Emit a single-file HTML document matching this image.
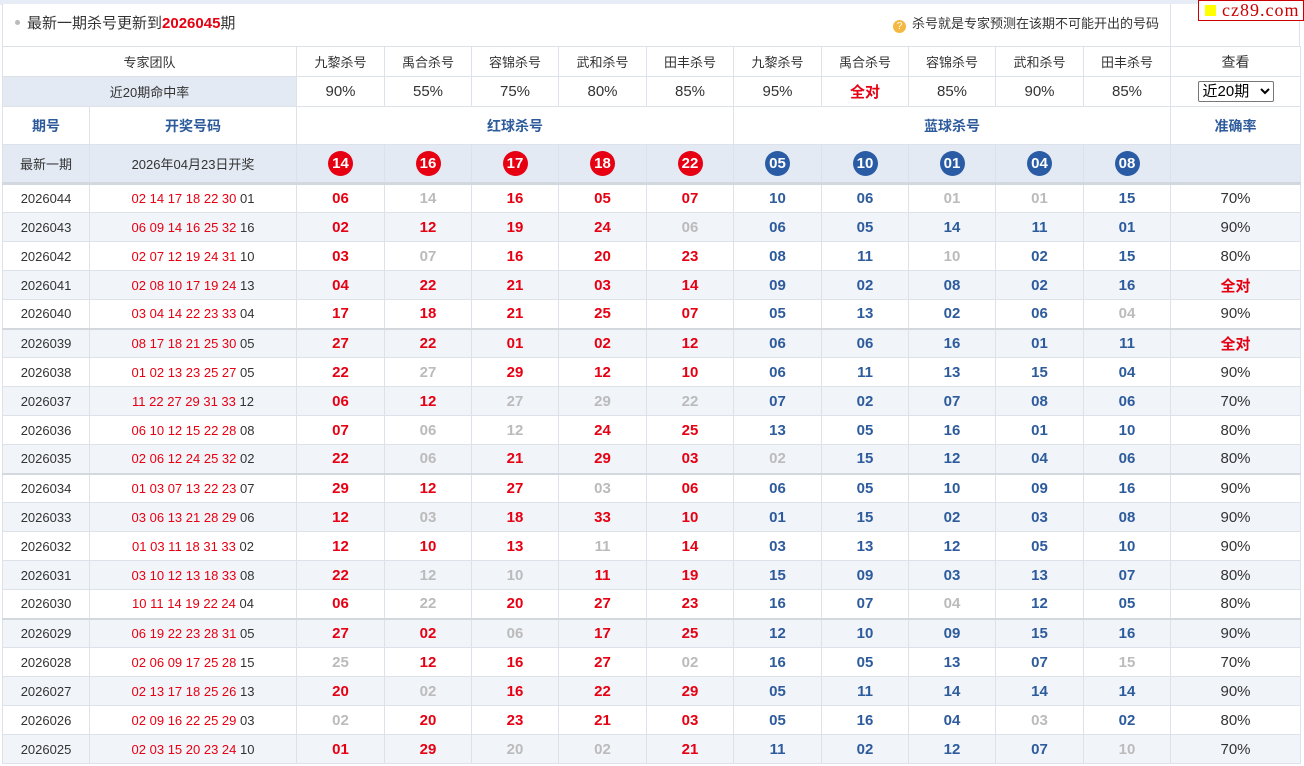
<!DOCTYPE html>
<html><head><meta charset="utf-8">
<style>
*{margin:0;padding:0;box-sizing:border-box}
body{width:1304px;height:766px;background:#fff;font-family:"Liberation Sans","Noto Sans CJK SC",sans-serif;color:#333;position:relative;overflow:hidden}
.topbar{position:absolute;left:0;top:0;width:1304px;height:5px;background:#e6edf6}
.titlebox{position:absolute;left:2px;top:4px;width:1168px;height:42px;border-left:1px solid #dde2ea;background:#fff}
.rbox{position:absolute;left:1170px;top:4px;width:130px;height:42px;border-left:1px solid #dde2ea;border-right:1px solid #dde2ea;background:#fff}
.title{position:absolute;left:12px;top:11px;font-size:15px;color:#333;line-height:18px}
.title i{display:inline-block;width:5px;height:5px;border-radius:50%;background:#bbb;margin-right:7px;vertical-align:3px}
.title b{color:#e60012}
.tip{position:absolute;left:890px;top:12px;font-size:13px;color:#333;line-height:16px}
.tip i{display:inline-block;width:13px;height:13px;border-radius:50%;background:#f5b843;color:#fff;font-size:10px;text-align:center;line-height:13px;font-style:normal;margin-right:6px;vertical-align:-1px}
.logo{position:absolute;left:1198px;top:0;width:106px;height:21px;border:1px solid #c00;background:#fff;font-family:"Liberation Serif",serif;font-size:18px;color:#c00;line-height:18px;padding-left:23px;letter-spacing:1px}
.logo i{position:absolute;left:6px;top:4px;width:11px;height:11px;background:#ff0}
table{position:absolute;left:2px;top:46px;border-collapse:collapse;table-layout:fixed;width:1298px}
td{border:1px solid #dde2ea;text-align:center;font-size:13px;white-space:nowrap;padding:0}
.h1 td{height:30px}
.h2 td{height:30px;font-size:15px}
.h2 td.lb{background:#e3eaf4;font-size:13px}
.h3 td{height:38px;color:#2d5b9c;font-weight:bold;font-size:14px}
.h4 td{height:39px;background:#e3eaf4;border-bottom:3px solid #d3d8df}
.ball{display:inline-block;width:25px;height:25px;border-radius:50%;color:#fff;font-weight:bold;font-size:15px;line-height:25px;font-family:"Liberation Sans",sans-serif}
.rb{background:#e60012}.bb{background:#2a5ca5}
.d td{height:29px;font-size:13px}
.d td.n{font-weight:bold;font-size:15px;color:#e60012}
.d td.m{font-weight:bold;font-size:15px;color:#2d5b9c}
.d td.g{color:#bbb}
.d td.dr{color:#e60012}
.d td.dr span{color:#333}
.d td.p{font-size:15px}
.d td.all{color:#e60012;font-weight:bold;font-size:15px}
.l td{background:#f1f4f9}
.e td{border-bottom:2px solid #d3d8df}
select{font-size:15px;width:76px;height:21px;border:1px solid #777;border-radius:2px;background:#fff;font-family:"Liberation Sans","Noto Sans CJK SC",sans-serif}
.red{color:#e60012;font-weight:bold}
</style></head><body>
<div class="topbar"></div>
<div class="titlebox"><div class="title"><i></i>最新一期杀号更新到<b>2026045</b>期</div><div class="tip"><i>?</i>杀号就是专家预测在该期不可能开出的号码</div></div>
<div class="rbox"></div>
<div class="logo"><i></i>cz89.com</div>
<table>
<colgroup><col style="width:87px"><col style="width:207px"><col style="width:88px"><col style="width:87px"><col style="width:87px"><col style="width:88px"><col style="width:87px"><col style="width:88px"><col style="width:87px"><col style="width:87px"><col style="width:88px"><col style="width:87px"><col style="width:130px"></colgroup>
<tr class="h1"><td colspan="2">专家团队</td><td>九黎杀号</td><td>禹合杀号</td><td>容锦杀号</td><td>武和杀号</td><td>田丰杀号</td><td>九黎杀号</td><td>禹合杀号</td><td>容锦杀号</td><td>武和杀号</td><td>田丰杀号</td><td style="font-size:14px">查看</td></tr>
<tr class="h2"><td colspan="2" class="lb">近20期命中率</td><td>90%</td><td>55%</td><td>75%</td><td>80%</td><td>85%</td><td>95%</td><td class="red">全对</td><td>85%</td><td>90%</td><td>85%</td><td><select><option>近20期</option></select></td></tr>
<tr class="h3"><td>期号</td><td>开奖号码</td><td colspan="5">红球杀号</td><td colspan="5">蓝球杀号</td><td>准确率</td></tr>
<tr class="h4"><td>最新一期</td><td>2026年04月23日开奖</td><td><span class="ball rb">14</span></td><td><span class="ball rb">16</span></td><td><span class="ball rb">17</span></td><td><span class="ball rb">18</span></td><td><span class="ball rb">22</span></td><td><span class="ball bb">05</span></td><td><span class="ball bb">10</span></td><td><span class="ball bb">01</span></td><td><span class="ball bb">04</span></td><td><span class="ball bb">08</span></td><td></td></tr>
<tr class="d"><td>2026044</td><td class="dr">02 14 17 18 22 30 <span>01</span></td><td class="n">06</td><td class="n g">14</td><td class="n">16</td><td class="n">05</td><td class="n">07</td><td class="m">10</td><td class="m">06</td><td class="m g">01</td><td class="m g">01</td><td class="m">15</td><td class="p">70%</td></tr>
<tr class="d l"><td>2026043</td><td class="dr">06 09 14 16 25 32 <span>16</span></td><td class="n">02</td><td class="n">12</td><td class="n">19</td><td class="n">24</td><td class="n g">06</td><td class="m">06</td><td class="m">05</td><td class="m">14</td><td class="m">11</td><td class="m">01</td><td class="p">90%</td></tr>
<tr class="d"><td>2026042</td><td class="dr">02 07 12 19 24 31 <span>10</span></td><td class="n">03</td><td class="n g">07</td><td class="n">16</td><td class="n">20</td><td class="n">23</td><td class="m">08</td><td class="m">11</td><td class="m g">10</td><td class="m">02</td><td class="m">15</td><td class="p">80%</td></tr>
<tr class="d l"><td>2026041</td><td class="dr">02 08 10 17 19 24 <span>13</span></td><td class="n">04</td><td class="n">22</td><td class="n">21</td><td class="n">03</td><td class="n">14</td><td class="m">09</td><td class="m">02</td><td class="m">08</td><td class="m">02</td><td class="m">16</td><td class="all">全对</td></tr>
<tr class="d e"><td>2026040</td><td class="dr">03 04 14 22 23 33 <span>04</span></td><td class="n">17</td><td class="n">18</td><td class="n">21</td><td class="n">25</td><td class="n">07</td><td class="m">05</td><td class="m">13</td><td class="m">02</td><td class="m">06</td><td class="m g">04</td><td class="p">90%</td></tr>
<tr class="d l"><td>2026039</td><td class="dr">08 17 18 21 25 30 <span>05</span></td><td class="n">27</td><td class="n">22</td><td class="n">01</td><td class="n">02</td><td class="n">12</td><td class="m">06</td><td class="m">06</td><td class="m">16</td><td class="m">01</td><td class="m">11</td><td class="all">全对</td></tr>
<tr class="d"><td>2026038</td><td class="dr">01 02 13 23 25 27 <span>05</span></td><td class="n">22</td><td class="n g">27</td><td class="n">29</td><td class="n">12</td><td class="n">10</td><td class="m">06</td><td class="m">11</td><td class="m">13</td><td class="m">15</td><td class="m">04</td><td class="p">90%</td></tr>
<tr class="d l"><td>2026037</td><td class="dr">11 22 27 29 31 33 <span>12</span></td><td class="n">06</td><td class="n">12</td><td class="n g">27</td><td class="n g">29</td><td class="n g">22</td><td class="m">07</td><td class="m">02</td><td class="m">07</td><td class="m">08</td><td class="m">06</td><td class="p">70%</td></tr>
<tr class="d"><td>2026036</td><td class="dr">06 10 12 15 22 28 <span>08</span></td><td class="n">07</td><td class="n g">06</td><td class="n g">12</td><td class="n">24</td><td class="n">25</td><td class="m">13</td><td class="m">05</td><td class="m">16</td><td class="m">01</td><td class="m">10</td><td class="p">80%</td></tr>
<tr class="d l e"><td>2026035</td><td class="dr">02 06 12 24 25 32 <span>02</span></td><td class="n">22</td><td class="n g">06</td><td class="n">21</td><td class="n">29</td><td class="n">03</td><td class="m g">02</td><td class="m">15</td><td class="m">12</td><td class="m">04</td><td class="m">06</td><td class="p">80%</td></tr>
<tr class="d"><td>2026034</td><td class="dr">01 03 07 13 22 23 <span>07</span></td><td class="n">29</td><td class="n">12</td><td class="n">27</td><td class="n g">03</td><td class="n">06</td><td class="m">06</td><td class="m">05</td><td class="m">10</td><td class="m">09</td><td class="m">16</td><td class="p">90%</td></tr>
<tr class="d l"><td>2026033</td><td class="dr">03 06 13 21 28 29 <span>06</span></td><td class="n">12</td><td class="n g">03</td><td class="n">18</td><td class="n">33</td><td class="n">10</td><td class="m">01</td><td class="m">15</td><td class="m">02</td><td class="m">03</td><td class="m">08</td><td class="p">90%</td></tr>
<tr class="d"><td>2026032</td><td class="dr">01 03 11 18 31 33 <span>02</span></td><td class="n">12</td><td class="n">10</td><td class="n">13</td><td class="n g">11</td><td class="n">14</td><td class="m">03</td><td class="m">13</td><td class="m">12</td><td class="m">05</td><td class="m">10</td><td class="p">90%</td></tr>
<tr class="d l"><td>2026031</td><td class="dr">03 10 12 13 18 33 <span>08</span></td><td class="n">22</td><td class="n g">12</td><td class="n g">10</td><td class="n">11</td><td class="n">19</td><td class="m">15</td><td class="m">09</td><td class="m">03</td><td class="m">13</td><td class="m">07</td><td class="p">80%</td></tr>
<tr class="d e"><td>2026030</td><td class="dr">10 11 14 19 22 24 <span>04</span></td><td class="n">06</td><td class="n g">22</td><td class="n">20</td><td class="n">27</td><td class="n">23</td><td class="m">16</td><td class="m">07</td><td class="m g">04</td><td class="m">12</td><td class="m">05</td><td class="p">80%</td></tr>
<tr class="d l"><td>2026029</td><td class="dr">06 19 22 23 28 31 <span>05</span></td><td class="n">27</td><td class="n">02</td><td class="n g">06</td><td class="n">17</td><td class="n">25</td><td class="m">12</td><td class="m">10</td><td class="m">09</td><td class="m">15</td><td class="m">16</td><td class="p">90%</td></tr>
<tr class="d"><td>2026028</td><td class="dr">02 06 09 17 25 28 <span>15</span></td><td class="n g">25</td><td class="n">12</td><td class="n">16</td><td class="n">27</td><td class="n g">02</td><td class="m">16</td><td class="m">05</td><td class="m">13</td><td class="m">07</td><td class="m g">15</td><td class="p">70%</td></tr>
<tr class="d l"><td>2026027</td><td class="dr">02 13 17 18 25 26 <span>13</span></td><td class="n">20</td><td class="n g">02</td><td class="n">16</td><td class="n">22</td><td class="n">29</td><td class="m">05</td><td class="m">11</td><td class="m">14</td><td class="m">14</td><td class="m">14</td><td class="p">90%</td></tr>
<tr class="d"><td>2026026</td><td class="dr">02 09 16 22 25 29 <span>03</span></td><td class="n g">02</td><td class="n">20</td><td class="n">23</td><td class="n">21</td><td class="n">03</td><td class="m">05</td><td class="m">16</td><td class="m">04</td><td class="m g">03</td><td class="m">02</td><td class="p">80%</td></tr>
<tr class="d l"><td>2026025</td><td class="dr">02 03 15 20 23 24 <span>10</span></td><td class="n">01</td><td class="n">29</td><td class="n g">20</td><td class="n g">02</td><td class="n">21</td><td class="m">11</td><td class="m">02</td><td class="m">12</td><td class="m">07</td><td class="m g">10</td><td class="p">70%</td></tr>
</table>
</body></html>
